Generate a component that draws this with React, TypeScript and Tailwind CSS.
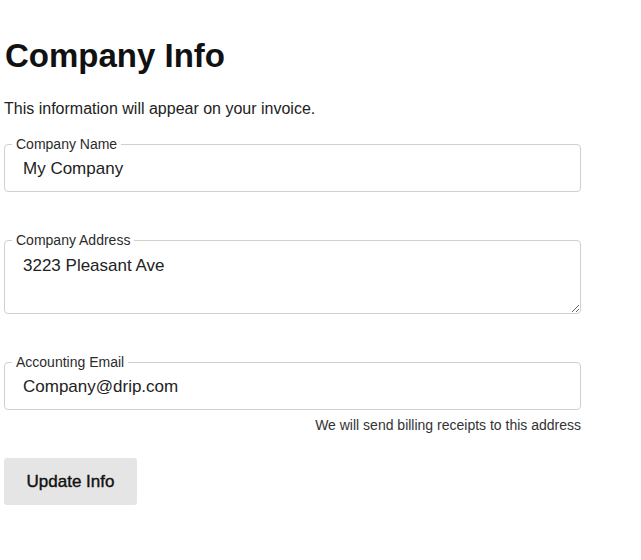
import React from "react";

const font = { fontFamily: '"Liberation Sans", Arial, sans-serif' };

function Field({
  label,
  children,
  className = "",
}: {
  label: string;
  children: React.ReactNode;
  className?: string;
}) {
  return (
    <fieldset
      className={`m-0 w-[577px] rounded-[4px] border border-[#cfcfcf] p-0 ${className}`}
    >
      <legend className="ml-[7px] px-[4px] text-[14px] leading-[20px] text-[#2b2b2b]">
        {label}
      </legend>
      {children}
    </fieldset>
  );
}

export default function App() {
  return (
    <div className="min-h-[560px] w-[641px] bg-white pl-[4px] pt-[36px] text-black" style={font}>
      <h1 className="ml-[1px] text-[33px] font-bold leading-[40px] text-[#111]">Company Info</h1>
      <p className="mt-[21px] text-[16px] leading-[24px] text-[#222]">
        This information will appear on your invoice.
      </p>

      <Field label="Company Name" className="mt-[13px]">
        <input
          defaultValue="My Company"
          className="mt-[2px] block h-[25px] w-full bg-transparent pl-[18px] text-[17px] leading-[25px] text-[#222] outline-none"
          style={font}
        />
        <div className="h-[10px]" />
      </Field>

      <Field label="Company Address" className="mt-[38px]">
        <textarea
          defaultValue="3223 Pleasant Ave"
          className="block h-[63px] w-full resize-y bg-transparent pl-[18px] pt-[3px] text-[17px] leading-[25px] text-[#222] outline-none"
          style={font}
        />
      </Field>

      <Field label="Accounting Email" className="mt-[38px]">
        <input
          defaultValue="Company@drip.com"
          className="mt-[2px] block h-[25px] w-full bg-transparent pl-[18px] text-[17px] leading-[25px] text-[#222] outline-none"
          style={font}
        />
        <div className="h-[10px]" />
      </Field>

      <p className="mt-[5px] w-[577px] text-right text-[14px] leading-[20px] text-[#333]">
        We will send billing receipts to this address
      </p>

      <button
        className="mt-[23px] h-[47px] w-[133px] rounded-[3px] bg-[#e5e5e5] text-[17px] font-normal text-[#111] [-webkit-text-stroke:0.4px_#111]"
        style={font}
      >
        Update Info
      </button>
    </div>
  );
}
